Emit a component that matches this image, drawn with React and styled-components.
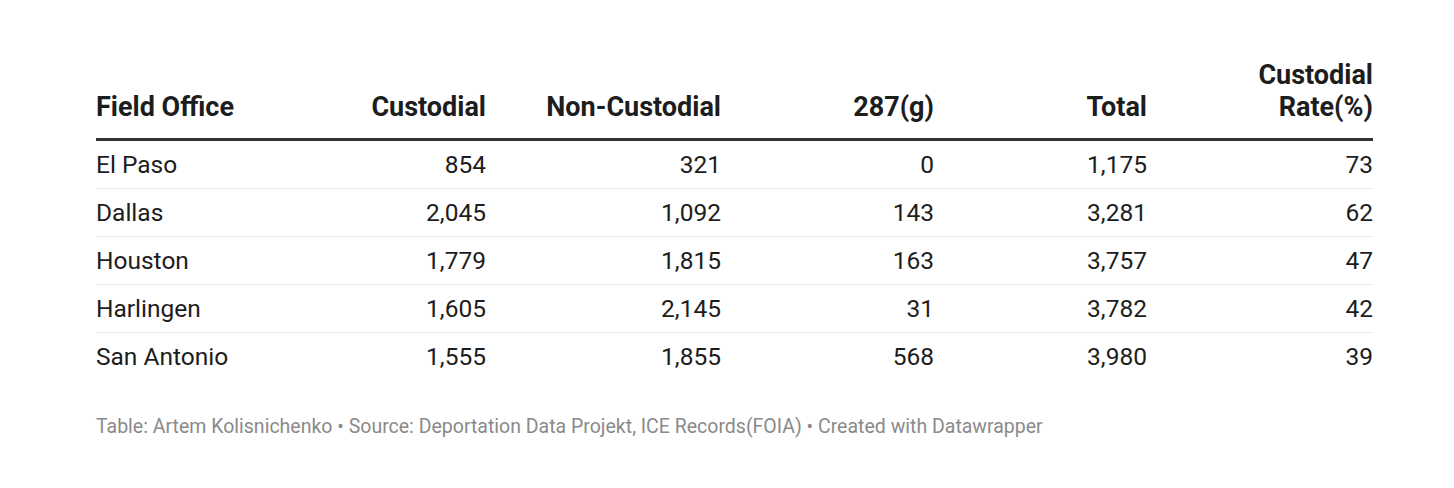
import styled, { createGlobalStyle } from "styled-components";

const GlobalStyle = createGlobalStyle`
  body {
    margin: 0;
    background: #ffffff;
    font-family: Roboto, "Liberation Sans", sans-serif;
  }
`;

const rows = [
  ["El Paso", "854", "321", "0", "1,175", "73"],
  ["Dallas", "2,045", "1,092", "143", "3,281", "62"],
  ["Houston", "1,779", "1,815", "163", "3,757", "47"],
  ["Harlingen", "1,605", "2,145", "31", "3,782", "42"],
  ["San Antonio", "1,555", "1,855", "568", "3,980", "39"],
];

function App() {
  return (
    <Page>
      <GlobalStyle />
      <Table>
        <HeadRow>
          <HeadCell>Field Office</HeadCell>
          <HeadCell $num>Custodial</HeadCell>
          <HeadCell $num>Non-Custodial</HeadCell>
          <HeadCell $num>287(g)</HeadCell>
          <HeadCell $num>Total</HeadCell>
          <HeadCell $num>
            Custodial
            <br />
            Rate(%)
          </HeadCell>
        </HeadRow>
        {rows.map((r, i) => (
          <Row key={r[0]} $last={i === rows.length - 1}>
            {r.map((v, j) => (
              <Cell key={j} $num={j > 0}>
                {v}
              </Cell>
            ))}
          </Row>
        ))}
      </Table>
      <Footer>
        Table: Artem Kolisnichenko • Source: Deportation Data Projekt, ICE
        Records(FOIA) • Created with Datawrapper
      </Footer>
    </Page>
  );
}

export default App;

const Page = styled.div`
  padding: 59px 81px 0 96px;
  width: 1277px;
`;

const Table = styled.div`
  display: flex;
  flex-direction: column;
`;

const cols = "200px 190px 235px 213px 213px 226px";

const HeadRow = styled.div`
  display: grid;
  grid-template-columns: ${cols};
  align-items: end;
  padding-bottom: 15px;
  border-bottom: 3px solid #333333;
`;

const HeadCell = styled.div`
  font-size: 27px;
  font-weight: 700;
  line-height: 32px;
  color: #1d1d1d;
  white-space: nowrap;
  text-align: ${(p) => (p.$num ? "right" : "left")};
`;

const Row = styled.div`
  display: grid;
  grid-template-columns: ${cols};
  align-items: center;
  height: 47px;
  border-bottom: ${(p) => (p.$last ? "none" : "1px solid #e6e6e6")};
`;

const Cell = styled.div`
  font-size: 24.5px;
  color: #1d1d1d;
  text-align: ${(p) => (p.$num ? "right" : "left")};
`;

const Footer = styled.div`
  margin-top: 35px;
  font-size: 19.5px;
  color: #8a8a8a;
  white-space: nowrap;
`;
